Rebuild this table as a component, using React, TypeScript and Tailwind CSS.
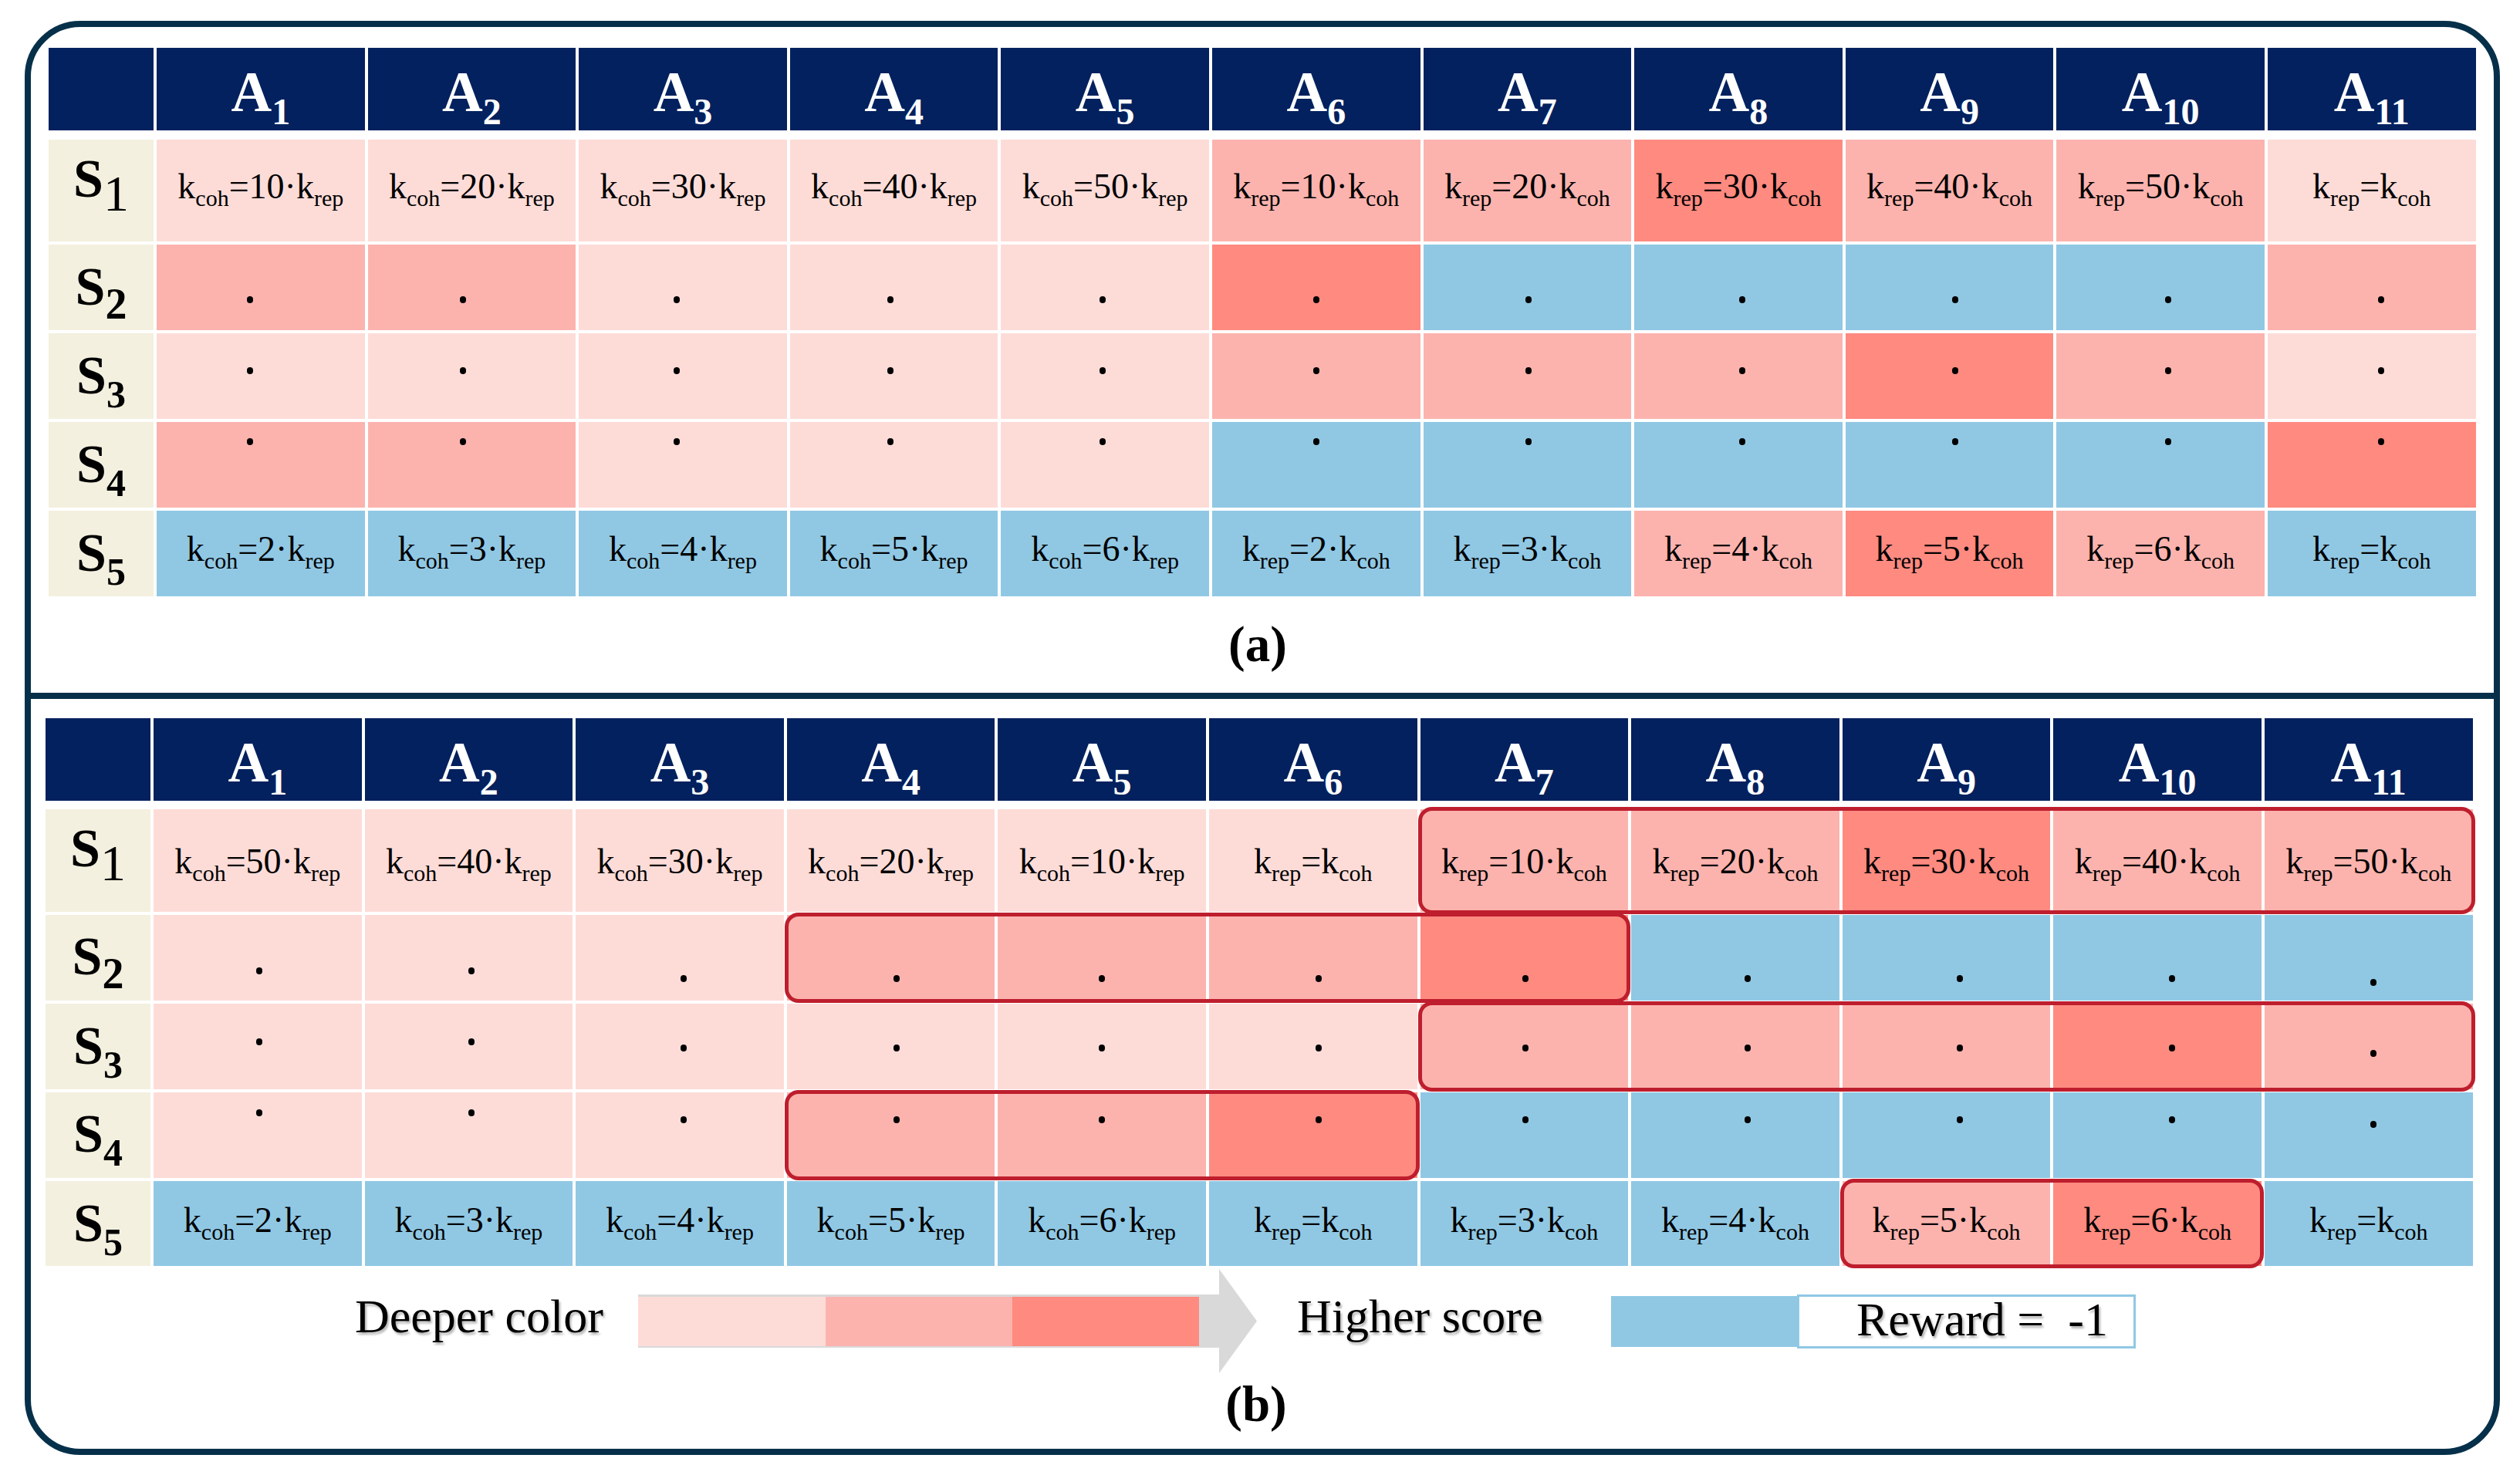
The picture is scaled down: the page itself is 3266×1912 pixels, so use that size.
import React from "react";

type Tone = "L" | "M" | "D" | "B";
type Side = "coh" | "rep";
type Formula = { lhs: Side; coef?: string; rhs: Side };

type RowSpec = {
  tones: string;
  formulas?: Formula[];
  dotTop?: string[];
  height: string;
  stubPad: string;
  stubSub: string;
  textPad?: string;
  group?: [number, number];
};

const toneBg: Record<Tone, string> = {
  L: "bg-[#fddcd8]",
  M: "bg-[#fcb3ae]",
  D: "bg-[#fe8a80]",
  B: "bg-[#90c8e4]",
};

const cr = (n: string): Formula => ({ lhs: "coh", coef: n, rhs: "rep" });
const rc = (n: string): Formula => ({ lhs: "rep", coef: n, rhs: "coh" });
const eq: Formula = { lhs: "rep", rhs: "coh" };

const same = (cls: string) => Array.from({ length: 11 }, () => cls);
const split3 = (a: string, b: string, c: string) =>
  Array.from({ length: 11 }, (_, i) => (i < 2 ? a : i < 10 ? b : c));

const subS1 = "relative top-[18px] text-[66px] font-normal";
const subS2 = "relative top-[18px] text-[56px]";
const subS = "relative top-[18px] text-[50px]";

const panelA: RowSpec[] = [
  {
    tones: "LLLLLMMDMML",
    formulas: [cr("10"), cr("20"), cr("30"), cr("40"), cr("50"), rc("10"), rc("20"), rc("30"), rc("40"), rc("50"), eq],
    height: "h-[132px]",
    stubPad: "pt-[16px]",
    stubSub: subS1,
    textPad: "pb-[11px]",
  },
  { tones: "MMLLLDBBBBM", dotTop: same("pt-[67px]"), height: "h-[111px]", stubPad: "pt-[20px]", stubSub: subS2 },
  { tones: "LLLLLMMMDML", dotTop: same("pt-[44px]"), height: "h-[111px]", stubPad: "pt-[20px]", stubSub: subS },
  { tones: "MMLLLBBBBBD", dotTop: same("pt-[21px]"), height: "h-[111px]", stubPad: "pt-[20px]", stubSub: subS },
  {
    tones: "BBBBBBBMDMB",
    formulas: [cr("2"), cr("3"), cr("4"), cr("5"), cr("6"), rc("2"), rc("3"), rc("4"), rc("5"), rc("6"), eq],
    height: "h-[111px]",
    stubPad: "pt-[20px]",
    stubSub: subS,
    textPad: "pb-[11px]",
  },
];

const panelB: RowSpec[] = [
  {
    tones: "LLLLLLMMDMM",
    formulas: [cr("50"), cr("40"), cr("30"), cr("20"), cr("10"), eq, rc("10"), rc("20"), rc("30"), rc("40"), rc("50")],
    height: "h-[133px]",
    stubPad: "pt-[16px]",
    stubSub: subS1,
    textPad: "pt-[2px]",
    group: [6, 10],
  },
  {
    tones: "LLLMMMDBBBB",
    dotTop: split3("pt-[68px]", "pt-[78px]", "pt-[83px]"),
    height: "h-[111px]",
    stubPad: "pt-[19px]",
    stubSub: subS2,
    group: [3, 6],
  },
  {
    tones: "LLLLLLMMMDM",
    dotTop: split3("pt-[45px]", "pt-[53px]", "pt-[60px]"),
    height: "h-[111px]",
    stubPad: "pt-[20px]",
    stubSub: subS,
    group: [6, 10],
  },
  {
    tones: "LLLMMDBBBBB",
    dotTop: split3("pt-[22px]", "pt-[31px]", "pt-[37px]"),
    height: "h-[111px]",
    stubPad: "pt-[19px]",
    stubSub: subS,
    group: [3, 5],
  },
  {
    tones: "BBBBBBBBMDB",
    formulas: [cr("2"), cr("3"), cr("4"), cr("5"), cr("6"), eq, rc("3"), rc("4"), rc("5"), rc("6"), eq],
    height: "h-[110px]",
    stubPad: "pt-[20px]",
    stubSub: subS,
    textPad: "pb-[8px]",
    group: [8, 9],
  },
];

const dotXA = [
  "-translate-x-[14px]",
  "-translate-x-[11px]",
  "-translate-x-[8px]",
  "-translate-x-[5px]",
  "-translate-x-[3px]",
  "translate-x-0",
  "translate-x-[2px]",
  "translate-x-[5px]",
  "translate-x-[7px]",
  "translate-x-[10px]",
  "translate-x-[12px]",
];

const dotXB = [
  "translate-x-[2px]",
  "translate-x-[4px]",
  "translate-x-[5px]",
  "translate-x-[7px]",
  "translate-x-0",
  "translate-x-[7px]",
  "translate-x-[2px]",
  "translate-x-[16px]",
  "translate-x-[17px]",
  "translate-x-[19px]",
  "translate-x-[6px]",
];

function K({ sub }: { sub: Side }) {
  return (
    <>
      k<span className="relative top-[10px] text-[30px]">{sub}</span>
    </>
  );
}

function FormulaText({ f }: { f: Formula }) {
  return (
    <span className="whitespace-nowrap text-[46px] leading-none">
      <K sub={f.lhs} />={f.coef ? `${f.coef}·` : ""}
      <K sub={f.rhs} />
    </span>
  );
}

function HeaderRow() {
  return (
    <div className="flex h-[107px] gap-[4px]">
      <div className="w-[136px] shrink-0 bg-[#03215e]" />
      {Array.from({ length: 11 }, (_, i) => (
        <div
          key={i}
          className="flex w-[269.6px] shrink-0 items-center justify-center bg-[#03215e] pt-[8px] text-white"
        >
          <span className="text-[73px] font-bold leading-none">
            A<span className="relative top-[17px] text-[48px]">{i + 1}</span>
          </span>
        </div>
      ))}
    </div>
  );
}

function BodyRow({ n, spec, dotX }: { n: number; spec: RowSpec; dotX: string[] }) {
  const cells = spec.tones.split("").map((t, i) => (
    <div
      key={i}
      className={`flex w-[269.6px] shrink-0 justify-center ${toneBg[t as Tone]} ${
        spec.formulas ? `items-center ${spec.textPad ?? ""}` : ""
      }`}
    >
      {spec.formulas ? (
        <FormulaText f={spec.formulas[i]} />
      ) : (
        <div className={spec.dotTop?.[i]}>
          <div className={`h-[9px] w-[8px] rounded-full bg-black ${dotX[i]}`} />
        </div>
      )}
    </div>
  ));

  let content: React.ReactNode = cells;
  if (spec.group) {
    const [a, b] = spec.group;
    content = (
      <>
        {cells.slice(0, a)}
        <div className="relative flex gap-[4px]">
          {cells.slice(a, b + 1)}
          <div className="pointer-events-none absolute -inset-[3px] z-10 rounded-[18px] border-[5px] border-[#be1e2d]" />
        </div>
        {cells.slice(b + 1)}
      </>
    );
  }

  return (
    <div className={`flex gap-[4px] ${spec.height}`}>
      <div className={`flex w-[136px] shrink-0 justify-center bg-[#f3f0df] ${spec.stubPad}`}>
        <span className="text-[70px] font-bold leading-none">
          S<span className={spec.stubSub}>{n}</span>
        </span>
      </div>
      {content}
    </div>
  );
}

function Table({ rows, dotX, gapTop }: { rows: RowSpec[]; dotX: string[]; gapTop: string }) {
  return (
    <div className="w-[3146px]">
      <HeaderRow />
      <div className={`flex flex-col gap-[4px] ${gapTop}`}>
        {rows.map((r, i) => (
          <BodyRow key={i} n={i + 1} spec={r} dotX={dotX} />
        ))}
      </div>
    </div>
  );
}

function Legend() {
  return (
    <div className="ml-[401px] mt-[4px] flex h-[135px] items-center">
      <div className="w-[367px] shrink-0 pb-[14px] text-[62px] leading-none [text-shadow:2px_3px_3px_rgba(0,0,0,0.3)]">
        Deeper color
      </div>
      <div className="flex h-[69px] w-[753px] shrink-0 bg-[#d9d9d9] pb-[2px] pt-[3px]">
        <div className="w-[243px] bg-[#fddcd8]" />
        <div className="w-[242px] bg-[#fcb3ae]" />
        <div className="w-[242px] bg-[#fe8a80]" />
      </div>
      <svg width="49" height="135" viewBox="0 0 49 135" className="shrink-0">
        <polygon points="0,0 49,67.5 0,135" fill="#d9d9d9" />
      </svg>
      <div className="ml-[52px] w-[407px] shrink-0 pb-[14px] text-[62px] leading-none [text-shadow:2px_3px_3px_rgba(0,0,0,0.3)]">
        Higher score
      </div>
      <div className="h-[66px] w-[241px] shrink-0 bg-[#90c8e4]" />
      <div className="flex h-[70px] w-[439px] shrink-0 items-center border-[3px] border-[#90c8e4] bg-white pl-[74px]">
        <span className="whitespace-pre pb-[6px] text-[62px] leading-none [text-shadow:2px_3px_3px_rgba(0,0,0,0.3)]">
          Reward =  -1
        </span>
      </div>
    </div>
  );
}

export default function App() {
  return (
    <div className="h-[1912px] w-[3266px] overflow-hidden bg-white pl-[32px] pt-[27px] font-['Liberation_Serif','Times_New_Roman',serif] text-black">
      <div className="flex h-[1859px] w-[3208px] flex-col overflow-hidden rounded-[72px] border-[8px] border-[#06304a]">
        <section className="h-[863px] shrink-0 pl-[23px] pt-[27px]">
          <Table rows={panelA} dotX={dotXA} gapTop="mt-[12px]" />
          <div className="mt-[30px] w-[3146px] pr-[12px] text-center text-[65px] font-bold leading-none">(a)</div>
        </section>
        <section className="flex-1 border-t-[8px] border-[#06304a] pl-[19px] pt-[25px]">
          <Table rows={panelB} dotX={dotXB} gapTop="mt-[11px]" />
          <Legend />
          <div className="mt-[8px] w-[3146px] pr-[8px] text-center text-[65px] font-bold leading-none">(b)</div>
        </section>
      </div>
    </div>
  );
}
